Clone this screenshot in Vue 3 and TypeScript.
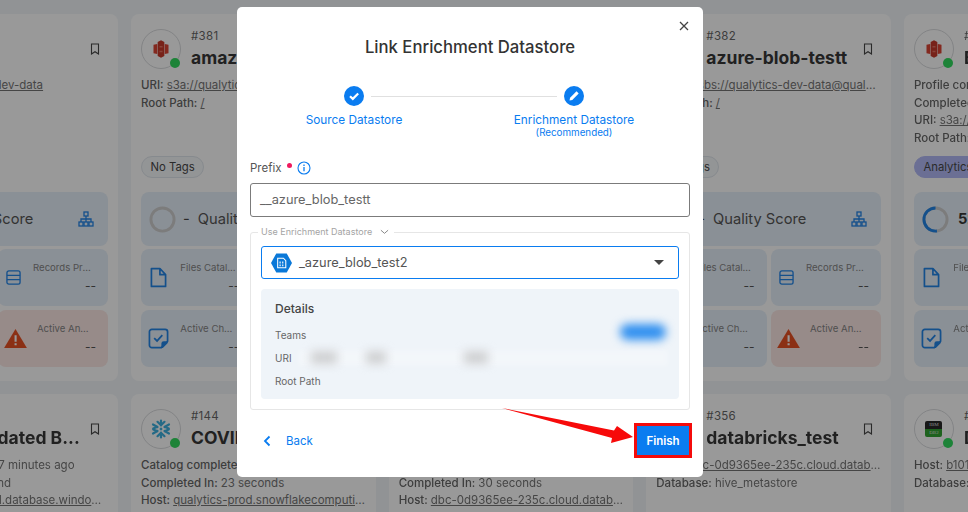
<script setup lang="ts">
interface MetaLine {
  label?: string
  value: string
  link?: boolean
}

interface Card {
  id: string
  name: string
  logo: 's3' | 'snowflake' | 'db2'
  lines: MetaLine[]
  tag?: string
  tagFilled?: boolean
  score?: string
  panels: boolean
}

const s3Uri = 's3a://qualytics-dev-data'

const cards: Card[] = [
  { id: '#380', name: 's3', logo: 's3', lines: [{ label: 'URI', value: s3Uri, link: true }], panels: true },
  { id: '#381', name: 'amazon_s3', logo: 's3', lines: [{ label: 'URI', value: s3Uri, link: true }, { label: 'Root Path', value: '/', link: true }], tag: 'No Tags', panels: true },
  { id: '#379', name: 'azure_blob', logo: 's3', lines: [{ label: 'URI', value: s3Uri, link: true }], tag: 'No Tags', panels: true },
  { id: '#382', name: 'azure-blob-testt', logo: 's3', lines: [{ label: 'URI', value: 'wasbs://qualytics-dev-data@qualytics.blob.core', link: true }, { label: 'Root Path', value: '/', link: true }], tag: 'No Tags', panels: true },
  { id: '#377', name: 'Bank Dataset', logo: 's3', lines: [{ label: 'Profile completed', value: '2 hours ago' }, { label: 'Completed In', value: '5 seconds' }, { label: 'URI', value: s3Uri, link: true }, { label: 'Root Path', value: '/', link: true }], tag: 'Analytics', tagFilled: true, score: '52', panels: true },
  { id: '#201', name: 'Last Updated B...', logo: 'snowflake', lines: [{ label: 'Catalog completed', value: '17 minutes ago' }, { label: 'Completed In', value: '1 second' }, { label: 'Host', value: 'qualytics-mssql.database.windows.net', link: true }], panels: false },
  { id: '#144', name: 'COVID-19', logo: 'snowflake', lines: [{ label: 'Catalog completed', value: '1 hour ago' }, { label: 'Completed In', value: '23 seconds' }, { label: 'Host', value: 'qualytics-prod.snowflakecomputing.com', link: true }], panels: false },
  { id: '#355', name: 'databricks', logo: 'snowflake', lines: [{ label: 'Scan completed', value: '3 hours ago' }, { label: 'Completed In', value: '30 seconds' }, { label: 'Host', value: 'dbc-0d9365ee-235c.cloud.databricks.com', link: true }], panels: false },
  { id: '#356', name: 'databricks_test', logo: 'snowflake', lines: [{ label: 'Host', value: 'dbc-0d9365ee-235c.cloud.databricks.com', link: true }, { label: 'Database', value: 'hive_metastore' }], panels: false },
  { id: '#301', name: 'DB2', logo: 'db2', lines: [{ label: 'Host', value: 'b101d15f-e79b.databases.appdomain', link: true }, { label: 'Database', value: 'BLUDB' }], panels: false },
]
</script>

<template>
  <div class="page">
    <svg class="defs" aria-hidden="true">
      <symbol id="i-s3" viewBox="0 0 24 24">
        <path fill="#d6301f" d="M3 7l4.500-1V18L3 17zM21 7l-4.500-1V18l4.500-1z" />
        <path fill="#c02413" d="M8 3.500L12 1.500l4 2v17l-4 2-4-2z" />
        <path fill="#e2604f" d="M10.200 8.500h3.600v1.800h-3.600zM10.200 14h3.600v1.800h-3.600z" />
      </symbol>
      <symbol id="i-network" viewBox="0 0 16 16">
        <g fill="none" stroke="currentColor" stroke-width="1.300">
          <rect x="6" y="1" width="4" height="4" />
          <rect x="1" y="11" width="4" height="4" />
          <rect x="6" y="11" width="4" height="4" />
          <rect x="11" y="11" width="4" height="4" />
          <path d="M8 5v6M3 11V8h10v3" />
        </g>
      </symbol>
      <symbol id="i-file" viewBox="0 0 18 22">
        <path fill="none" stroke="currentColor" stroke-width="1.800" stroke-linejoin="round" d="M1.500 1.500h9l6 6.500v12.500h-15zM10.500 1.500V8h6" />
      </symbol>
      <symbol id="i-records" viewBox="0 0 16 16">
        <rect x="1" y="1" width="14" height="14" rx="2" fill="none" stroke="currentColor" stroke-width="1.400" />
        <path d="M1 5.700h14M1 10.300h14" stroke="currentColor" stroke-width="1.400" />
      </symbol>
      <symbol id="i-warning" viewBox="0 0 24 20">
        <path fill="#e63d0c" d="M12 0l12 20H0z" />
        <path fill="#fff" d="M11 6.500h2.200v7H11zM11 15h2.200v2.200H11z" />
      </symbol>
      <symbol id="i-checkdoc" viewBox="0 0 22 22">
        <path fill="none" stroke="currentColor" stroke-width="1.800" stroke-linejoin="round" d="M4 1.500h14a2.500 2.500 0 0 1 2.500 2.500v10l-6.500 6.500H4A2.500 2.500 0 0 1 1.500 18V4A2.500 2.500 0 0 1 4 1.500z" />
        <path fill="currentColor" d="M20.500 14v2l-5 5h-1.500v-4.500a2.500 2.500 0 0 1 2.500-2.500z" />
        <path fill="none" stroke="currentColor" stroke-width="1.800" d="M6.500 10.500l3 3 5.500-6" />
      </symbol>
      <symbol id="i-bookmark" viewBox="0 0 10 12">
        <path fill="none" stroke="currentColor" stroke-width="1.100" d="M1.500 1h7v10l-3.500-2.300L1.500 11z" />
      </symbol>
      <symbol id="i-snowflake" viewBox="0 0 20 20">
        <g fill="none" stroke="#29a8dc" stroke-width="2.200" stroke-linecap="round">
          <path d="M10 1.500v5M10 13.500v5M6.500 2.800L10 6.200l3.500-3.400M6.500 17.200L10 13.800l3.500 3.400" />
          <path d="M2 5.500l4.500 2.500M18 5.500L13.500 8M2 14.500L6.500 12M18 14.500L13.500 12" />
          <path d="M2.200 9.500L6 8M17.800 9.500L14 8M2.200 10.500L6 12M17.800 10.500L14 12" />
        </g>
        <path fill="#29a8dc" d="M10 8.300L11.700 10 10 11.700 8.300 10z" />
      </symbol>
    </svg>

    <main class="board">
      <article v-for="card in cards" :key="card.id" class="card">
        <header class="card-head">
          <div class="avatar">
            <svg v-if="card.logo === 's3'" class="logo"><use href="#i-s3" /></svg>
            <svg v-else-if="card.logo === 'snowflake'" class="logo"><use href="#i-snowflake" /></svg>
            <div v-else class="db2">
              <span class="db2-top">IBM</span>
              <span class="db2-bottom">DB2</span>
            </div>
            <span class="status"></span>
          </div>
          <div class="title-box">
            <div class="card-id">{{ card.id }}</div>
            <div class="card-name">{{ card.name }}</div>
          </div>
          <svg class="bookmark"><use href="#i-bookmark" /></svg>
        </header>

        <div class="meta">
          <div v-for="line in card.lines" :key="line.value" class="meta-line">
            <b v-if="line.label">{{ line.label }}: </b>
            <span :class="{ link: line.link }">{{ line.value }}</span>
          </div>
        </div>

        <template v-if="card.panels">
          <div class="tag-row">
            <span v-if="card.tag" class="tag" :class="{ filled: card.tagFilled }">{{ card.tag }}</span>
          </div>
          <div class="score panel">
            <svg class="gauge" viewBox="0 0 28 28">
              <circle cx="14" cy="14" r="12" fill="none" stroke="#c9c9c9" stroke-width="3" />
              <circle v-if="card.score" cx="14" cy="14" r="12" fill="none" stroke="#0a78e6" stroke-width="3" stroke-dasharray="39 76" transform="rotate(-90 14 14) scale(1 -1) translate(0 -28)" />
            </svg>
            <strong v-if="card.score" class="score-num">{{ card.score }}</strong>
            <span v-else class="dash">-</span>
            <span class="score-label">Quality Score</span>
            <svg class="network"><use href="#i-network" /></svg>
          </div>
          <div class="stats">
            <div class="stat panel">
              <svg class="stat-icon file"><use href="#i-file" /></svg>
              <div class="stat-text inset"><div class="stat-label">Files Cataloged</div><div class="stat-value">--</div></div>
            </div>
            <div class="stat panel">
              <svg class="stat-icon records"><use href="#i-records" /></svg>
              <div class="stat-text"><div class="stat-label">Records Profiled</div><div class="stat-value">--</div></div>
            </div>
            <div class="stat panel">
              <svg class="stat-icon checkdoc"><use href="#i-checkdoc" /></svg>
              <div class="stat-text inset"><div class="stat-label">Active Checks</div><div class="stat-value">--</div></div>
            </div>
            <div class="stat panel alert">
              <svg class="stat-icon warning"><use href="#i-warning" /></svg>
              <div class="stat-text inset"><div class="stat-label">Active Anomalies</div><div class="stat-value">--</div></div>
            </div>
          </div>
        </template>
      </article>
    </main>

    <div class="scrim"></div>

    <section class="modal">
      <button class="close" aria-label="Close">
        <svg viewBox="0 0 10 10" width="10" height="10"><path d="M1 1l8 8M9 1l-8 8" stroke="#444" stroke-width="1.300" /></svg>
      </button>
      <h1 class="modal-title">Link Enrichment Datastore</h1>

      <div class="stepper">
        <div class="step-dots">
          <span class="dot">
            <svg viewBox="0 0 20 20" width="20" height="20"><path d="M6 10.300l2.800 2.600L14.200 7.500" fill="none" stroke="#fff" stroke-width="2.200" /></svg>
          </span>
          <span class="step-line"></span>
          <span class="dot">
            <svg viewBox="0 0 20 20" width="20" height="20"><path d="M5.500 14.500l.6-2.800 6.400-6.400 2.200 2.200-6.400 6.400z" fill="#fff" /></svg>
          </span>
        </div>
        <div class="step-labels">
          <div class="step-label">Source Datastore</div>
          <div class="step-label">
            Enrichment Datastore
            <small>(Recommended)</small>
          </div>
        </div>
      </div>

      <div class="field-label">
        Prefix
        <span class="required"></span>
        <svg class="info" viewBox="0 0 14 14" width="14" height="14">
          <circle cx="7" cy="7" r="6" fill="none" stroke="#0a7cf0" stroke-width="1.100" />
          <path d="M7 6v4.300M7 3.600v1.300" stroke="#0a7cf0" stroke-width="1.300" />
        </svg>
      </div>
      <div class="input">__azure_blob_testt</div>

      <fieldset class="enrich">
        <legend>
          Use Enrichment Datastore
          <svg viewBox="0 0 10 6" width="9" height="6"><path d="M1 1l4 3.500L9 1" fill="none" stroke="#888" stroke-width="1.100" /></svg>
        </legend>

        <div class="select">
          <svg class="hex" viewBox="0 0 22 20" width="21" height="20">
            <path d="M5.500 0h11L22 10l-5.500 10h-11L0 10z" fill="#0a78d8" />
            <path d="M7 5h6l2.500 2.500V15H7z" fill="none" stroke="#fff" stroke-width="1.100" />
            <path d="M8.800 8.500h1.500v2H8.800zM11.500 8.500H13v2h-1.500zM8.800 11.500h1.500v2H8.800zM11.500 11.500H13v2h-1.500z" fill="#fff" opacity=".8" />
          </svg>
          <span class="select-text">_azure_blob_test2</span>
          <span class="caret"></span>
        </div>

        <div class="details">
          <div class="details-title">Details</div>
          <div class="details-row">Teams</div>
          <div class="details-row">URI</div>
          <div class="details-row">Root Path</div>
          <div class="blur-band"></div>
          <div class="blur-team"></div>
          <div class="blur-uri a"></div>
          <div class="blur-uri b"></div>
          <div class="blur-uri c"></div>
        </div>
      </fieldset>

      <footer class="modal-foot">
        <button class="back">
          <svg viewBox="0 0 8 12" width="8" height="12"><path d="M6.500 1.500L2 6l4.500 4.500" fill="none" stroke="#0a7cf0" stroke-width="1.800" /></svg>
          Back
        </button>
        <button class="finish">Finish</button>
      </footer>

      <!-- red annotation arrow drawn on the screenshot -->
      <svg class="arrow" viewBox="0 0 135 40" width="135" height="40">
        <path d="M0 0L112 22.500L115 18L131 29L109 35L110 30z" fill="#f70a0a" />
      </svg>
    </section>
  </div>
</template>

<style>
html,
body {
  margin: 0;
  background: #f4f6f8;
}
</style>

<style scoped>
.page {
  position: relative;
  width: 968px;
  height: 512px;
  overflow: hidden;
  font-family: Inter, 'Noto Sans', sans-serif;
  color: #3a3f44;
}
.defs {
  position: absolute;
  width: 0;
  height: 0;
}
.board {
  display: grid;
  grid-template-columns: repeat(5, 244.67px);
  grid-auto-rows: 367px;
  gap: 13px;
  margin-left: -126.67px;
  padding-top: 14px;
  background: #f0f4f8;
  height: 498px;
  filter: blur(0.6px);
}
.card {
  background: #fff;
  border-radius: 8px;
  padding: 15px 10px 14px;
  box-sizing: border-box;
  display: flex;
  flex-direction: column;
}
.card-head {
  display: flex;
  gap: 10px;
  height: 40px;
}
.avatar {
  position: relative;
  flex: none;
  width: 40px;
  height: 40px;
  box-sizing: border-box;
  border: 1px solid #d5d7da;
  border-radius: 50%;
  display: flex;
  align-items: center;
  justify-content: center;
}
.logo {
  width: 20px;
  height: 20px;
}
.db2 {
  width: 17px;
  height: 16px;
  display: flex;
  flex-direction: column;
  font-size: 5px;
  line-height: 8px;
  text-align: center;
  color: #ddd;
  font-family: 'Liberation Serif', serif;
  border-radius: 2px;
  overflow: hidden;
}
.db2-top {
  background: #111;
}
.db2-bottom {
  background: #1c9a1c;
}
.status {
  position: absolute;
  right: 0;
  bottom: 0;
  width: 10px;
  height: 10px;
  border-radius: 50%;
  background: #1ad64c;
}
.title-box {
  flex: 1;
  min-width: 0;
}
.card-id {
  font-size: 11.500px;
  line-height: 14px;
  letter-spacing: 0.3px;
  color: #555;
}
.card-name {
  font-size: 17.500px;
  line-height: 24px;
  font-weight: 700;
  color: #222;
  margin-top: 3px;
  white-space: nowrap;
  overflow: hidden;
  text-overflow: ellipsis;
}
.bookmark {
  flex: none;
  width: 10px;
  height: 12px;
  margin: 14px 8px 0 0;
  color: #333;
}
.meta {
  margin-top: 8px;
  min-height: 78px;
  font-size: 11.500px;
  line-height: 17.500px;
  color: #666;
}
.meta-line {
  white-space: nowrap;
  overflow: hidden;
  text-overflow: ellipsis;
}
.meta b {
  font-weight: 500;
  color: #555;
}
.link {
  text-decoration: underline;
}
.tag-row {
  height: 22px;
  margin-bottom: 15px;
}
.tag {
  display: inline-block;
  height: 22px;
  line-height: 20px;
  box-sizing: border-box;
  padding: 0 8.500px;
  border: 1px solid #dde3ea;
  border-radius: 11px;
  font-size: 11.300px;
  background: #f4f7fa;
  color: #333;
}
.tag.filled {
  background: #aab2f5;
  border-color: #aab2f5;
}
.panel {
  background: #e4eef9;
  border-radius: 8px;
}
.score {
  height: 54px;
  display: flex;
  align-items: center;
  padding: 0 14px 0 8px;
}
.gauge {
  width: 27px;
  height: 27px;
  flex: none;
}
.dash {
  margin: 0 8px 0 7px;
  font-size: 14.700px;
  color: #333;
}
.score-num {
  margin: 0 6px 0 9px;
  font-size: 14.700px;
  color: #222;
}
.score-label {
  flex: 1;
  font-size: 14.700px;
  color: #444;
}
.network {
  width: 16px;
  height: 16px;
  color: #0a78e6;
}
.stats {
  display: grid;
  grid-template-columns: 1fr 1fr;
  grid-template-rows: 57px 57px;
  gap: 4px;
  margin-top: 3px;
}
.stat {
  display: flex;
  align-items: center;
  padding-right: 12px;
  min-width: 0;
}
.stat-icon {
  flex: none;
  color: #0a78e6;
}
.file {
  width: 17px;
  height: 21px;
  margin-left: 9px;
}
.records {
  width: 15px;
  height: 15px;
  margin-left: 8px;
}
.checkdoc {
  width: 21px;
  height: 21px;
  margin-left: 7px;
}
.warning {
  width: 23px;
  height: 19px;
  margin-left: 6px;
}
.stat-text {
  margin-left: auto;
  width: 63px;
  text-align: right;
}
.stat-label {
  font-size: 9.600px;
  line-height: 14px;
  color: #777;
  white-space: nowrap;
  overflow: hidden;
  text-overflow: ellipsis;
}
.stat-text.inset .stat-label {
  padding: 0 3px 0 4px;
}
.stat-value {
  font-size: 12px;
  line-height: 16px;
  margin-top: 3px;
  color: #444;
}
.alert {
  background: #fbe5e1;
}
.scrim {
  position: absolute;
  inset: 0;
  background: rgba(33, 33, 33, 0.46);
}
.modal {
  position: absolute;
  left: 237px;
  top: 7px;
  width: 466px;
  height: 470px;
  box-sizing: border-box;
  padding: 28px 13px 0;
  background: #fff;
  border-radius: 5px;
  display: flex;
  flex-direction: column;
}
.close {
  position: absolute;
  top: 14px;
  right: 14px;
  width: 10px;
  height: 10px;
  padding: 0;
  border: 0;
  background: none;
  line-height: 0;
}
.modal-title {
  margin: 0;
  text-align: center;
  font-size: 16.700px;
  line-height: 24px;
  font-weight: 500;
  color: #333;
}
.stepper {
  margin: 27px 12px 0 0;
  color: #0a7cf0;
}
.step-dots {
  display: flex;
  justify-content: center;
  align-items: center;
}
.dot {
  width: 20px;
  height: 20px;
  border-radius: 50%;
  background: #0a7cf0;
  line-height: 0;
}
.step-line {
  width: 186px;
  height: 1px;
  margin: 0 7px;
  background: #e0e0e0;
}
.step-labels {
  display: flex;
  justify-content: center;
  margin-top: 7px;
}
.step-label {
  flex: none;
  width: 220px;
  text-align: center;
  font-size: 11.800px;
  line-height: 15px;
}
.step-label small {
  display: block;
  font-size: 9.800px;
  line-height: 10px;
}
.field-label {
  display: flex;
  align-items: center;
  margin-top: 22px;
  font-size: 11.500px;
  line-height: 16px;
  color: #555;
}
.required {
  width: 5px;
  height: 5px;
  margin: -6px 5px 0 5px;
  border-radius: 50%;
  background: #ef1a5e;
}
.input {
  margin-top: 7px;
  height: 34px;
  box-sizing: border-box;
  padding-left: 9px;
  border: 1px solid #7b7b7b;
  border-radius: 3px;
  font-size: 12.800px;
  line-height: 32px;
  color: #666;
}
.enrich {
  margin: 9px 0 0;
  padding: 8px 10px 10px;
  border: 1px solid #e6e6e6;
  border-radius: 3px;
  min-width: 0;
}
.enrich legend {
  margin-left: -3px;
  padding: 0 3px;
  font-size: 9px;
  line-height: 12px;
  color: #a4a4a4;
}
.enrich legend svg {
  margin-left: 5px;
  margin-right: 2px;
}
.select {
  height: 33px;
  box-sizing: border-box;
  display: flex;
  align-items: center;
  padding: 0 14px 0 9px;
  border: 1px solid #0a7cf0;
  border-radius: 3px;
}
.select-text {
  flex: 1;
  margin-left: 7px;
  font-size: 12.800px;
  color: #555;
}
.caret {
  border-left: 5px solid transparent;
  border-right: 5px solid transparent;
  border-top: 5px solid #444;
}
.details {
  position: relative;
  height: 110px;
  box-sizing: border-box;
  margin-top: 10px;
  padding: 12px 14px;
  background: #eff4f9;
  border-radius: 4px;
}
.details-title {
  font-size: 12px;
  line-height: 16px;
  font-weight: 500;
  color: #444;
  margin-bottom: 11px;
}
.details-row {
  font-size: 10px;
  line-height: 14px;
  color: #666;
  margin-bottom: 9px;
}
.blur-band {
  position: absolute;
  left: 37px;
  top: 61px;
  width: 370px;
  height: 16px;
  background: rgba(255, 255, 255, 0.25);
  filter: blur(2px);
}
.blur-team {
  position: absolute;
  left: 359px;
  top: 35px;
  width: 46px;
  height: 16px;
  border-radius: 8px;
  background: #2f8fef;
  filter: blur(5px);
}
.blur-uri {
  position: absolute;
  top: 62px;
  height: 13px;
  background: #cfd0d2;
  filter: blur(5px);
}
.blur-uri.a {
  left: 50px;
  width: 26px;
}
.blur-uri.b {
  left: 105px;
  width: 20px;
}
.blur-uri.c {
  left: 203px;
  width: 24px;
}
.modal-foot {
  margin-top: 13px;
  display: flex;
  justify-content: space-between;
  align-items: center;
  margin-right: -2px;
}
.back {
  display: flex;
  align-items: center;
  gap: 15px;
  padding: 0 0 0 13px;
  border: 0;
  background: none;
  font: inherit;
  font-size: 11.500px;
  color: #0a7cf0;
}
.finish {
  width: 58px;
  height: 35px;
  box-sizing: border-box;
  border: 3px solid #f40b0b;
  background: #0a7cf0;
  color: #fff;
  font: inherit;
  font-size: 11.500px;
  font-weight: 600;
}
.arrow {
  position: absolute;
  left: 265px;
  top: 401px;
}
</style>
